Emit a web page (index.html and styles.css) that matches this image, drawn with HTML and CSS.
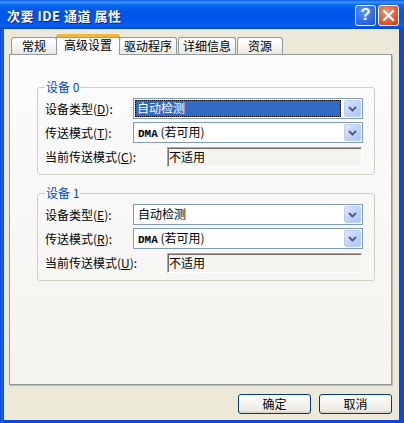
FILE: index.html
```html
<!DOCTYPE html>
<html lang="zh-CN">
<head>
  <meta charset="UTF-8" />
  <title>次要 IDE 通道 属性</title>
  <link rel="stylesheet" href="styles.css">
</head>
<body>

  <div class="window">
    <div class="titlebar">
      <span class="title">次要 IDE 通道 属性</span>
      <div class="caption-btn help">?</div>
      <div class="caption-btn close">
        <svg width="13" height="13" viewBox="0 0 13 13"><path d="M2 2 L11 11 M11 2 L2 11" stroke="#fff" stroke-width="2.2" stroke-linecap="square"/></svg>
      </div>
    </div>

    <div class="client">
      <div class="tabs">
        <div class="tab tab-2">常规</div>
        <div class="tab active">高级设置</div>
        <div class="tab">驱动程序</div>
        <div class="tab">详细信息</div>
        <div class="tab tab-2">资源</div>
      </div>

      <div class="panel">
        <fieldset class="group">
          <legend>设备 0</legend>
          <div class="row">
            <span class="label">设备类型(<u>D</u>):</span>
            <div class="combo">
              <div class="combo-text selected"><span>自动检测</span></div>
              <div class="combo-btn"><svg width="9" height="6" viewBox="0 0 9 6"><path d="M1 1 L4.5 4.5 L8 1" fill="none" stroke="#4D6185" stroke-width="2"/></svg></div>
            </div>
          </div>
          <div class="row">
            <span class="label">传送模式(<u>T</u>):</span>
            <div class="combo">
              <div class="combo-text"><span class="mono">DMA</span> (若可用)</div>
              <div class="combo-btn"><svg width="9" height="6" viewBox="0 0 9 6"><path d="M1 1 L4.5 4.5 L8 1" fill="none" stroke="#4D6185" stroke-width="2"/></svg></div>
            </div>
          </div>
          <div class="row">
            <span class="label">当前传送模式(<u>C</u>):</span>
            <div class="readonly">不适用</div>
          </div>
        </fieldset>

        <fieldset class="group">
          <legend>设备 1</legend>
          <div class="row">
            <span class="label">设备类型(<u>E</u>):</span>
            <div class="combo">
              <div class="combo-text">自动检测</div>
              <div class="combo-btn"><svg width="9" height="6" viewBox="0 0 9 6"><path d="M1 1 L4.5 4.5 L8 1" fill="none" stroke="#4D6185" stroke-width="2"/></svg></div>
            </div>
          </div>
          <div class="row">
            <span class="label">传送模式(<u>R</u>):</span>
            <div class="combo">
              <div class="combo-text"><span class="mono">DMA</span> (若可用)</div>
              <div class="combo-btn"><svg width="9" height="6" viewBox="0 0 9 6"><path d="M1 1 L4.5 4.5 L8 1" fill="none" stroke="#4D6185" stroke-width="2"/></svg></div>
            </div>
          </div>
          <div class="row">
            <span class="label">当前传送模式(<u>U</u>):</span>
            <div class="readonly">不适用</div>
          </div>
        </fieldset>
      </div>

      <div class="buttons">
        <button class="btn">确定</button>
        <button class="btn">取消</button>
      </div>
    </div>
  </div>

</body>
</html>
```

FILE: styles.css
```css
* {
  box-sizing: border-box;
}

body {
  margin: 0;
  font-family: "Noto Sans CJK SC", "Liberation Sans", sans-serif;
  font-size: 12px;
  color: #000;
}

.window {
  width: 404px;
  height: 423px;
  display: flex;
  flex-direction: column;
  background: linear-gradient(to right, #0840D8, #166AEE 2px, #0A48DC 4px);
}

.titlebar {
  height: 29px;
  display: flex;
  align-items: center;
  padding: 0 5px 0 7px;
  background: linear-gradient(#0A5BE8 0, #3D95FF 2px, #0B65F0 5px, #0055EA 12px, #0058EE 22px, #0C5DE8 26px, #0145CE 29px);
}

.title {
  flex: 1;
  color: #fff;
  font-weight: bold;
  font-size: 13px;
  letter-spacing: 0.5px;
  text-shadow: 1px 1px 0 #0A1E8C;
  padding-top: 1px;
}

.caption-btn {
  width: 21px;
  height: 21px;
  border: 1px solid #fff;
  border-radius: 3px;
  display: flex;
  align-items: center;
  justify-content: center;
  margin-left: 2px;
  margin-top: 1px;
}

.help {
  background: radial-gradient(circle at 40% 30%, #5C93F7, #2A63E0 70%, #1F52CB);
  color: #fff;
  font-family: "Liberation Sans", sans-serif;
  font-weight: bold;
  font-size: 17px;
}

.close {
  background: radial-gradient(circle at 40% 30%, #F09577, #E0592F 60%, #C8401A);
}

.client {
  flex: 1;
  margin: 0 5px 3px 4px;
  background: #ECE9D8;
  display: flex;
  flex-direction: column;
  padding: 5px 7px 6px 5px;
}

.tabs {
  height: 20px;
  display: flex;
  align-items: flex-end;
  padding-left: 2px;
}

.tab {
  height: 17px;
  padding: 0 4px;
  border: 1px solid #919B9C;
  border-bottom: none;
  border-radius: 3px 3px 0 0;
  background: linear-gradient(#FFFFFF, #F3F3EF 60%, #E8E7E0);
  line-height: 16px;
  text-align: center;
  margin-right: 1px;
}

.tab-2 {
  min-width: 46px;
}

.tab.active {
  height: 21px;
  margin: 0 -1px -1px -2px;
  padding: 0 7px;
  position: relative;
  z-index: 1;
  background: #FCFCFE;
  border-top: 3px solid #FFC83C;
  box-shadow: inset 0 1px 0 #E68B2C;
  border-top-color: #F5B43A;
  line-height: 16px;
}

.panel {
  flex: 1;
  border: 1px solid #919B9C;
  box-shadow: 1px 1px 0 #BDBAAA;
  background: linear-gradient(#FCFCFE, #F4F3EE);
  padding: 25px 16px 0 27px;
}

.group {
  margin: 0 0 11px 0;
  padding: 4px 11px 7px 7px;
  border: 1px solid #D0D0BF;
  border-radius: 3px;
  display: flex;
  flex-direction: column;
  gap: 3px;
}

.group legend {
  color: #0046D5;
  padding: 0 1px;
  line-height: 14px;
}

.row {
  height: 21px;
  display: flex;
  align-items: center;
  justify-content: space-between;
}

.label u {
  text-underline-offset: 1px;
}

.combo {
  width: 230px;
  height: 21px;
  border: 1px solid #7F9DB9;
  background: #fff;
  display: flex;
  align-items: center;
  padding: 1px;
}

.combo-text {
  flex: 1;
  height: 17px;
  line-height: 16px;
  padding-left: 3px;
  margin-right: 3px;
}

.combo-text.selected {
  background: #316AC5;
  color: #fff;
  outline: 1px dotted #000;
  outline-offset: -1px;
  padding-left: 2px;
}

.mono {
  font-family: "Liberation Mono", monospace;
  font-weight: bold;
  font-size: 11px;
}

.combo-btn {
  width: 17px;
  height: 17px;
  border-radius: 2px;
  border: 1px solid #B9CDF6;
  background: linear-gradient(135deg, #E2EBFE, #C1D3FB 50%, #AEC5F6);
  display: flex;
  align-items: center;
  justify-content: center;
}

.readonly {
  width: 195px;
  height: 20px;
  margin-right: 1px;
  border: 1px solid;
  border-color: #ACA899 #FFFFFF #FFFFFF #ACA899;
  box-shadow: inset 1px 1px 0 #716F64;
  background: #F4F3EE;
  line-height: 17px;
  padding-left: 1px;
}

.buttons {
  display: flex;
  justify-content: flex-end;
  gap: 8px;
  margin-top: 9px;
  padding-right: 0;
}

.btn {
  width: 73px;
  height: 20px;
  border: 1px solid #003C74;
  border-radius: 3px;
  background: linear-gradient(#FFFFFF, #F4F3EE 50%, #ECEBE6 85%, #D6D0C5);
  font-family: "Noto Sans CJK SC", sans-serif;
  font-size: 12px;
  padding: 0;
  line-height: 16px;
}
```
